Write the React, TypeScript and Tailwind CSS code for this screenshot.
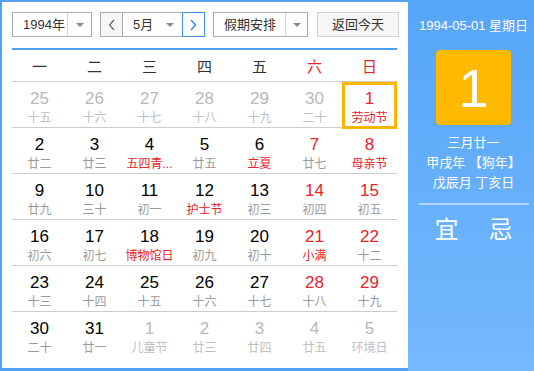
import React from "react";

type Cell = { n: number; l: string; nc: string; lc: string; today?: boolean };

const K = "text-[#000]";
const R = "text-[#e8232b]";
const G = "text-[#b8b8b8]";
const LG = "text-[#9a9a9a]";
const LO = "text-[#c0c0c0]";

const rows: Cell[][] = [
  [
    { n: 25, l: "十五", nc: G, lc: LO },
    { n: 26, l: "十六", nc: G, lc: LO },
    { n: 27, l: "十七", nc: G, lc: LO },
    { n: 28, l: "十八", nc: G, lc: LO },
    { n: 29, l: "十九", nc: G, lc: LO },
    { n: 30, l: "二十", nc: G, lc: LO },
    { n: 1, l: "劳动节", nc: R, lc: R, today: true },
  ],
  [
    { n: 2, l: "廿二", nc: K, lc: LG },
    { n: 3, l: "廿三", nc: K, lc: LG },
    { n: 4, l: "五四青...", nc: K, lc: R },
    { n: 5, l: "廿五", nc: K, lc: LG },
    { n: 6, l: "立夏", nc: K, lc: R },
    { n: 7, l: "廿七", nc: R, lc: LG },
    { n: 8, l: "母亲节", nc: R, lc: R },
  ],
  [
    { n: 9, l: "廿九", nc: K, lc: LG },
    { n: 10, l: "三十", nc: K, lc: LG },
    { n: 11, l: "初一", nc: K, lc: LG },
    { n: 12, l: "护士节", nc: K, lc: R },
    { n: 13, l: "初三", nc: K, lc: LG },
    { n: 14, l: "初四", nc: R, lc: LG },
    { n: 15, l: "初五", nc: R, lc: LG },
  ],
  [
    { n: 16, l: "初六", nc: K, lc: LG },
    { n: 17, l: "初七", nc: K, lc: LG },
    { n: 18, l: "博物馆日", nc: K, lc: R },
    { n: 19, l: "初九", nc: K, lc: LG },
    { n: 20, l: "初十", nc: K, lc: LG },
    { n: 21, l: "小满", nc: R, lc: R },
    { n: 22, l: "十二", nc: R, lc: LG },
  ],
  [
    { n: 23, l: "十三", nc: K, lc: LG },
    { n: 24, l: "十四", nc: K, lc: LG },
    { n: 25, l: "十五", nc: K, lc: LG },
    { n: 26, l: "十六", nc: K, lc: LG },
    { n: 27, l: "十七", nc: K, lc: LG },
    { n: 28, l: "十八", nc: R, lc: LG },
    { n: 29, l: "十九", nc: R, lc: LG },
  ],
  [
    { n: 30, l: "二十", nc: K, lc: LG },
    { n: 31, l: "廿一", nc: K, lc: LG },
    { n: 1, l: "儿童节", nc: G, lc: LO },
    { n: 2, l: "廿三", nc: G, lc: LO },
    { n: 3, l: "廿四", nc: G, lc: LO },
    { n: 4, l: "廿五", nc: G, lc: LO },
    { n: 5, l: "环境日", nc: G, lc: LO },
  ],
];

const weekdays = ["一", "二", "三", "四", "五", "六", "日"];

function Caret() {
  return (
    <span className="block w-0 h-0 border-l-[4px] border-r-[4px] border-t-[4px] border-l-transparent border-r-transparent border-t-[#8a8a8a]" />
  );
}

export default function App() {
  return (
    <div className="w-[534px] h-[371px] flex bg-[#52a1f4] font-['Liberation_Sans','Noto_Sans_CJK_SC',sans-serif] overflow-hidden">
      {/* left white panel */}
      <div className="mt-[2px] ml-[2px] w-[406px] h-[366px] bg-white pl-[10px] pt-[10px] flex flex-col">
        {/* controls */}
        <div className="flex h-[25px] items-stretch text-[13px] text-[#333]">
          <div className="w-[80px] flex border border-[#ababab] bg-white">
            <div className="w-[54px] flex items-center pl-[10px] leading-none">1994年</div>
            <div className="flex-1 flex items-center justify-center border-l border-[#d4d4d4]">
              <Caret />
            </div>
          </div>
          <div className="ml-[8px] flex">
            <div className="w-[23px] flex items-center justify-center border border-[#ababab] bg-[#f6f6f6]">
              <svg width="7" height="12" viewBox="0 0 7 12">
                <polyline points="6,1 1.5,6 6,11" fill="none" stroke="#666" strokeWidth="1.2" />
              </svg>
            </div>
            <div className="w-[59px] flex items-center border-y border-[#ababab] bg-white">
              <span className="ml-[10px] leading-none">5月</span>
              <span className="ml-auto mr-[8px]">
                <Caret />
              </span>
            </div>
            <div className="w-[23px] flex items-center justify-center border border-[#3d8ff0] bg-white">
              <svg width="7" height="12" viewBox="0 0 7 12">
                <polyline points="1,1 5.5,6 1,11" fill="none" stroke="#2f8ef2" strokeWidth="1.4" />
              </svg>
            </div>
          </div>
          <div className="ml-[8px] w-[95px] flex border border-[#ababab] bg-white">
            <div className="w-[71px] flex items-center pl-[10px] leading-none">假期安排</div>
            <div className="flex-1 flex items-center justify-center border-l border-[#d4d4d4]">
              <Caret />
            </div>
          </div>
          <div className="ml-[9px] w-[82px] flex items-center justify-center border border-[#d2d2d2] bg-[#f6f6f6] leading-none">
            返回今天
          </div>
        </div>

        {/* blue line */}
        <div className="mt-[11px] w-[385px] h-[2px] bg-[#4e9ef2]" />

        {/* weekday header */}
        <div className="w-[385px] grid grid-cols-7 h-[32px] border-b border-[#cccccc]">
          {weekdays.map((w, i) => (
            <div
              key={w}
              className={`flex items-center justify-center text-[15px] leading-none pt-[2px] ${
                i >= 5 ? "text-[#e8232b]" : "text-[#333]"
              }`}
            >
              {w}
            </div>
          ))}
        </div>

        {/* days */}
        <div className="w-[385px] flex flex-col">
          {rows.map((row, ri) => (
            <div
              key={ri}
              className={`grid grid-cols-7 h-[46px] ${ri < rows.length - 1 ? "border-b border-[#cccccc]" : ""}`}
            >
              {row.map((c, ci) =>
                c.today ? (
                  <div
                    key={ci}
                    className="flex flex-col items-center border-[3px] border-[#ffb400] pt-[4px] -mb-[1px] h-[47px] relative z-10 bg-white"
                  >
                    <span className={`text-[17px] leading-[20px] ${c.nc}`}>{c.n}</span>
                    <span className={`text-[12px] leading-[16px] mt-[1px] ${c.lc}`}>{c.l}</span>
                  </div>
                ) : (
                  <div key={ci} className="flex flex-col items-center pt-[7px]">
                    <span className={`text-[17px] leading-[20px] ${c.nc}`}>{c.n}</span>
                    <span className={`text-[12px] leading-[16px] mt-[1px] whitespace-nowrap ${c.lc}`}>{c.l}</span>
                  </div>
                )
              )}
            </div>
          ))}
        </div>
      </div>

      {/* right panel */}
      <div className="w-[126px] h-[371px] pl-[5px] bg-gradient-to-b from-[#55a5f7] to-[#75b9fe] flex flex-col items-center text-white">
        <div className="mt-[18px] text-[13px] leading-[16px] whitespace-nowrap">1994-05-01 星期日</div>
        <div className="mt-[16px] w-[75px] h-[75px] rounded-[4px] bg-[#ffb900] flex items-center justify-center">
          <span className="text-[54px] leading-none">1</span>
        </div>
        <div className="mt-[8px] text-[13px] leading-[20px] text-center whitespace-nowrap">
          <div>三月廿一</div>
          <div>甲戌年 【狗年】</div>
          <div>戊辰月 丁亥日</div>
        </div>
        <div className="mt-[10px] w-[110px] h-[2px] bg-white/50" />
        <div className="mt-[11px] flex gap-[30px] text-[24px] leading-[28px]">
          <span>宜</span>
          <span>忌</span>
        </div>
      </div>
    </div>
  );
}
